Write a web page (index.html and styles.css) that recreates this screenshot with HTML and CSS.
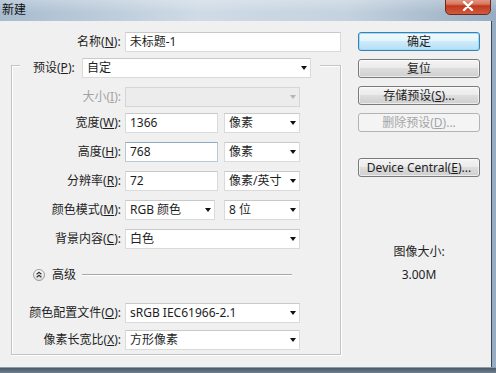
FILE: index.html
```html
<!DOCTYPE html>
<html lang="zh-CN">
<head>
  <meta charset="UTF-8">
  <title>新建</title>
  <link rel="stylesheet" href="styles.css">
</head>
<body>
  <div class="window">
    <div class="titlebar">
      <span class="title">新建</span>
      <div class="close-btn">
        <svg width="14" height="10" viewBox="0 0 14 10">
          <path d="M3 1 L11 9 M11 1 L3 9" stroke="#fff" stroke-width="2.4" stroke-linecap="round"/>
        </svg>
      </div>
    </div>

    <div class="client">
      <div class="form">
        <div class="row">
          <span class="lbl lbl-top">名称(<u>N</u>):</span>
          <div class="field w-name">未标题-1</div>
        </div>

        <div class="group">
          <div class="group-head">
            <span class="lbl-head">预设(<u>P</u>):</span>
            <div class="select w-preset"><span>自定</span><i class="arrow"></i></div>
          </div>

          <div class="row r-size">
            <span class="lbl disabled">大小(<u>I</u>):</span>
            <div class="select w-full is-disabled"><span></span><i class="arrow"></i></div>
          </div>
          <div class="row r-width">
            <span class="lbl">宽度(<u>W</u>):</span>
            <div class="field w-num">1366</div>
            <div class="select w-unit"><span>像素</span><i class="arrow"></i></div>
          </div>
          <div class="row r-gap">
            <span class="lbl">高度(<u>H</u>):</span>
            <div class="field w-num focus">768</div>
            <div class="select w-unit"><span>像素</span><i class="arrow"></i></div>
          </div>
          <div class="row r-gap">
            <span class="lbl">分辨率(<u>R</u>):</span>
            <div class="field w-num">72</div>
            <div class="select w-unit"><span>像素/英寸</span><i class="arrow"></i></div>
          </div>
          <div class="row r-gap">
            <span class="lbl">颜色模式(<u>M</u>):</span>
            <div class="select w-mode"><span>RGB 颜色</span><i class="arrow"></i></div>
            <div class="select w-unit w-bits"><span>8 位</span><i class="arrow"></i></div>
          </div>
          <div class="row r-gap">
            <span class="lbl">背景内容(<u>C</u>):</span>
            <div class="select w-full"><span>白色</span><i class="arrow"></i></div>
          </div>

          <div class="advanced">
            <svg class="adv-icon" width="12" height="12" viewBox="0 0 12 12">
              <defs>
                <linearGradient id="advg" x1="0" y1="0" x2="0" y2="1">
                  <stop offset="0" stop-color="#ffffff"/>
                  <stop offset="1" stop-color="#dcdcdc"/>
                </linearGradient>
              </defs>
              <circle cx="6" cy="6" r="5.5" fill="url(#advg)" stroke="#9a9a9a"/>
              <path d="M3.6 5.2 L6 3.2 L8.4 5.2 M3.6 8.2 L6 6.2 L8.4 8.2" fill="none" stroke="#333" stroke-width="1.2"/>
            </svg>
            <span class="adv-text">高级</span>
            <span class="adv-line"></span>
          </div>

          <div class="row r-profile">
            <span class="lbl">颜色配置文件(<u>O</u>):</span>
            <div class="select w-full"><span>sRGB IEC61966-2.1</span><i class="arrow"></i></div>
          </div>
          <div class="row r-aspect">
            <span class="lbl">像素长宽比(<u>X</u>):</span>
            <div class="select w-full"><span>方形像素</span><i class="arrow"></i></div>
          </div>
        </div>
      </div>

      <div class="side">
        <div class="btn default">确定</div>
        <div class="btn">复位</div>
        <div class="btn">存储预设(<u>S</u>)...</div>
        <div class="btn is-disabled">删除预设(<u>D</u>)...</div>
        <div class="btn btn-device">Device Central(<u>E</u>)...</div>
        <div class="img-size">图像大小:</div>
        <div class="img-value">3.00M</div>
      </div>
    </div>

    <div class="frame-bottom"></div>
  </div>
</body>
</html>
```

FILE: styles.css
```css
* {
  box-sizing: border-box;
}

html, body {
  margin: 0;
  padding: 0;
}

body {
  font-family: "Noto Sans", "Noto Sans CJK SC", sans-serif;
  font-size: 12px;
  color: #1e1e1e;
  background: #5a6a7a;
}

u {
  text-decoration: underline;
  text-underline-offset: 1px;
}

.window {
  width: 496px;
  height: 373px;
  display: flex;
  flex-direction: column;
  background: linear-gradient(to right, #a7bbcf, #cfdbe6 40%, #c4d2df 70%, #96acc2);
  overflow: hidden;
}

/* title bar */
.titlebar {
  height: 21px;
  flex-shrink: 0;
  position: relative;
  padding: 1px 0 0 2px;
  background: linear-gradient(rgba(255,255,255,0.25), rgba(255,255,255,0) 60%);
}

.title {
  font-family: "Noto Sans CJK SC", sans-serif;
  font-size: 12px;
  line-height: 16px;
  color: #111;
}

.close-btn {
  position: absolute;
  right: 5px;
  top: -5px;
  width: 46px;
  height: 20px;
  border: 1px solid #6a2a1e;
  border-radius: 0 0 5px 5px;
  background: linear-gradient(#eab3a4, #d8775f 45%, #c0391c 55%, #d35a3e);
  display: flex;
  align-items: flex-end;
  justify-content: center;
  padding-bottom: 3px;
}

/* client area */
.client {
  flex: 1;
  display: flex;
  background: #f0f0f0;
  margin-right: 4px;
  border-right: 1px solid #3b4754;
  padding-top: 11px;
}

.frame-bottom {
  height: 6px;
  flex-shrink: 0;
  border-top: 1px solid #8d9cab;
  background: linear-gradient(#4b5a6a, #6f7f90);
}

.form {
  width: 341px;
}

.row {
  display: flex;
  align-items: center;
  height: 20px;
}

.lbl {
  width: 109px;
  margin-right: 4px;
  text-align: right;
  white-space: nowrap;
  line-height: 16px;
}

.lbl-top {
  width: 121px;
}

.disabled {
  color: #a3a3a3;
}

.field,
.select {
  height: 20px;
  background: #fff;
  border: 1px solid #dadada;
  border-top-color: #c9c9c9;
  padding: 0 4px;
  line-height: 18px;
  white-space: nowrap;
  display: flex;
  align-items: center;
}

.select {
  justify-content: space-between;
  padding-right: 3px;
}

.field.focus {
  border-color: #b7c8d8;
  border-top-color: #8fa9c2;
}

.select.is-disabled {
  background: #ececec;
  border-color: #d6d6d6;
}

.arrow {
  width: 0;
  height: 0;
  border-left: 3.5px solid transparent;
  border-right: 3.5px solid transparent;
  border-top: 4px solid #111;
}

.is-disabled .arrow {
  border-top-color: #b5b5b5;
}

.w-name { width: 217px; }
.w-preset { width: 229px; }
.w-full { width: 175px; }
.w-num { width: 93px; }
.w-unit { width: 76px; margin-left: 6px; }
.w-mode { width: 90px; }
.w-bits { margin-left: 9px; }

/* group box */
.group {
  margin: 13px 0 0 11px;
  width: 330px;
  border: 1px solid #c4c4c4;
  box-shadow: inset 1px 1px 0 #fff, 1px 1px 0 #fff;
  padding-bottom: 4px;
}

.group-head {
  display: flex;
  align-items: center;
  width: fit-content;
  height: 20px;
  margin: -8px 0 0 8px;
  padding: 0 9px 0 13px;
  background: #f0f0f0;
}

.lbl-head {
  width: 44px;
  margin-right: 5px;
  white-space: nowrap;
  line-height: 16px;
}

.r-size { margin-top: 9px; }
.r-width { margin-top: 6px; }
.r-gap { margin-top: 9px; }
.r-profile { margin-top: 22px; }
.r-aspect { margin-top: 7px; }

.advanced {
  display: flex;
  align-items: center;
  height: 12px;
  margin: 20px 48px 0 21px;
}

.adv-text {
  margin: 0 6px 0 7px;
  line-height: 16px;
}

.adv-line {
  flex: 1;
  height: 2px;
  border-top: 1px solid #a8a8a8;
  border-bottom: 1px solid #fff;
}

/* right column */
.side {
  width: 122px;
  margin-left: 17px;
  display: flex;
  flex-direction: column;
}

.btn {
  height: 19px;
  margin-bottom: 8px;
  border: 1px solid #7a7a7a;
  border-radius: 3px;
  background: linear-gradient(#f4f4f4, #ebebeb 45%, #dddddd 50%, #cfcfcf);
  box-shadow: inset 0 0 0 1px rgba(255,255,255,0.6);
  text-align: center;
  line-height: 17px;
  white-space: nowrap;
}

.btn.default {
  border-color: #3c7fb1;
  background: linear-gradient(#f2faff, #e3f4fc 45%, #cdebfa 50%, #b5dff6);
  box-shadow: inset 0 0 0 1px #9fdcf8;
}

.btn.is-disabled {
  color: #a5a5a5;
  border-color: #b0b4b7;
  background: #f4f4f4;
  box-shadow: none;
}

.btn-device {
  margin-top: 18px;
}

.img-size {
  margin-top: 59px;
  text-align: center;
  line-height: 16px;
}

.img-value {
  margin-top: 7px;
  text-align: center;
  line-height: 16px;
}
```
